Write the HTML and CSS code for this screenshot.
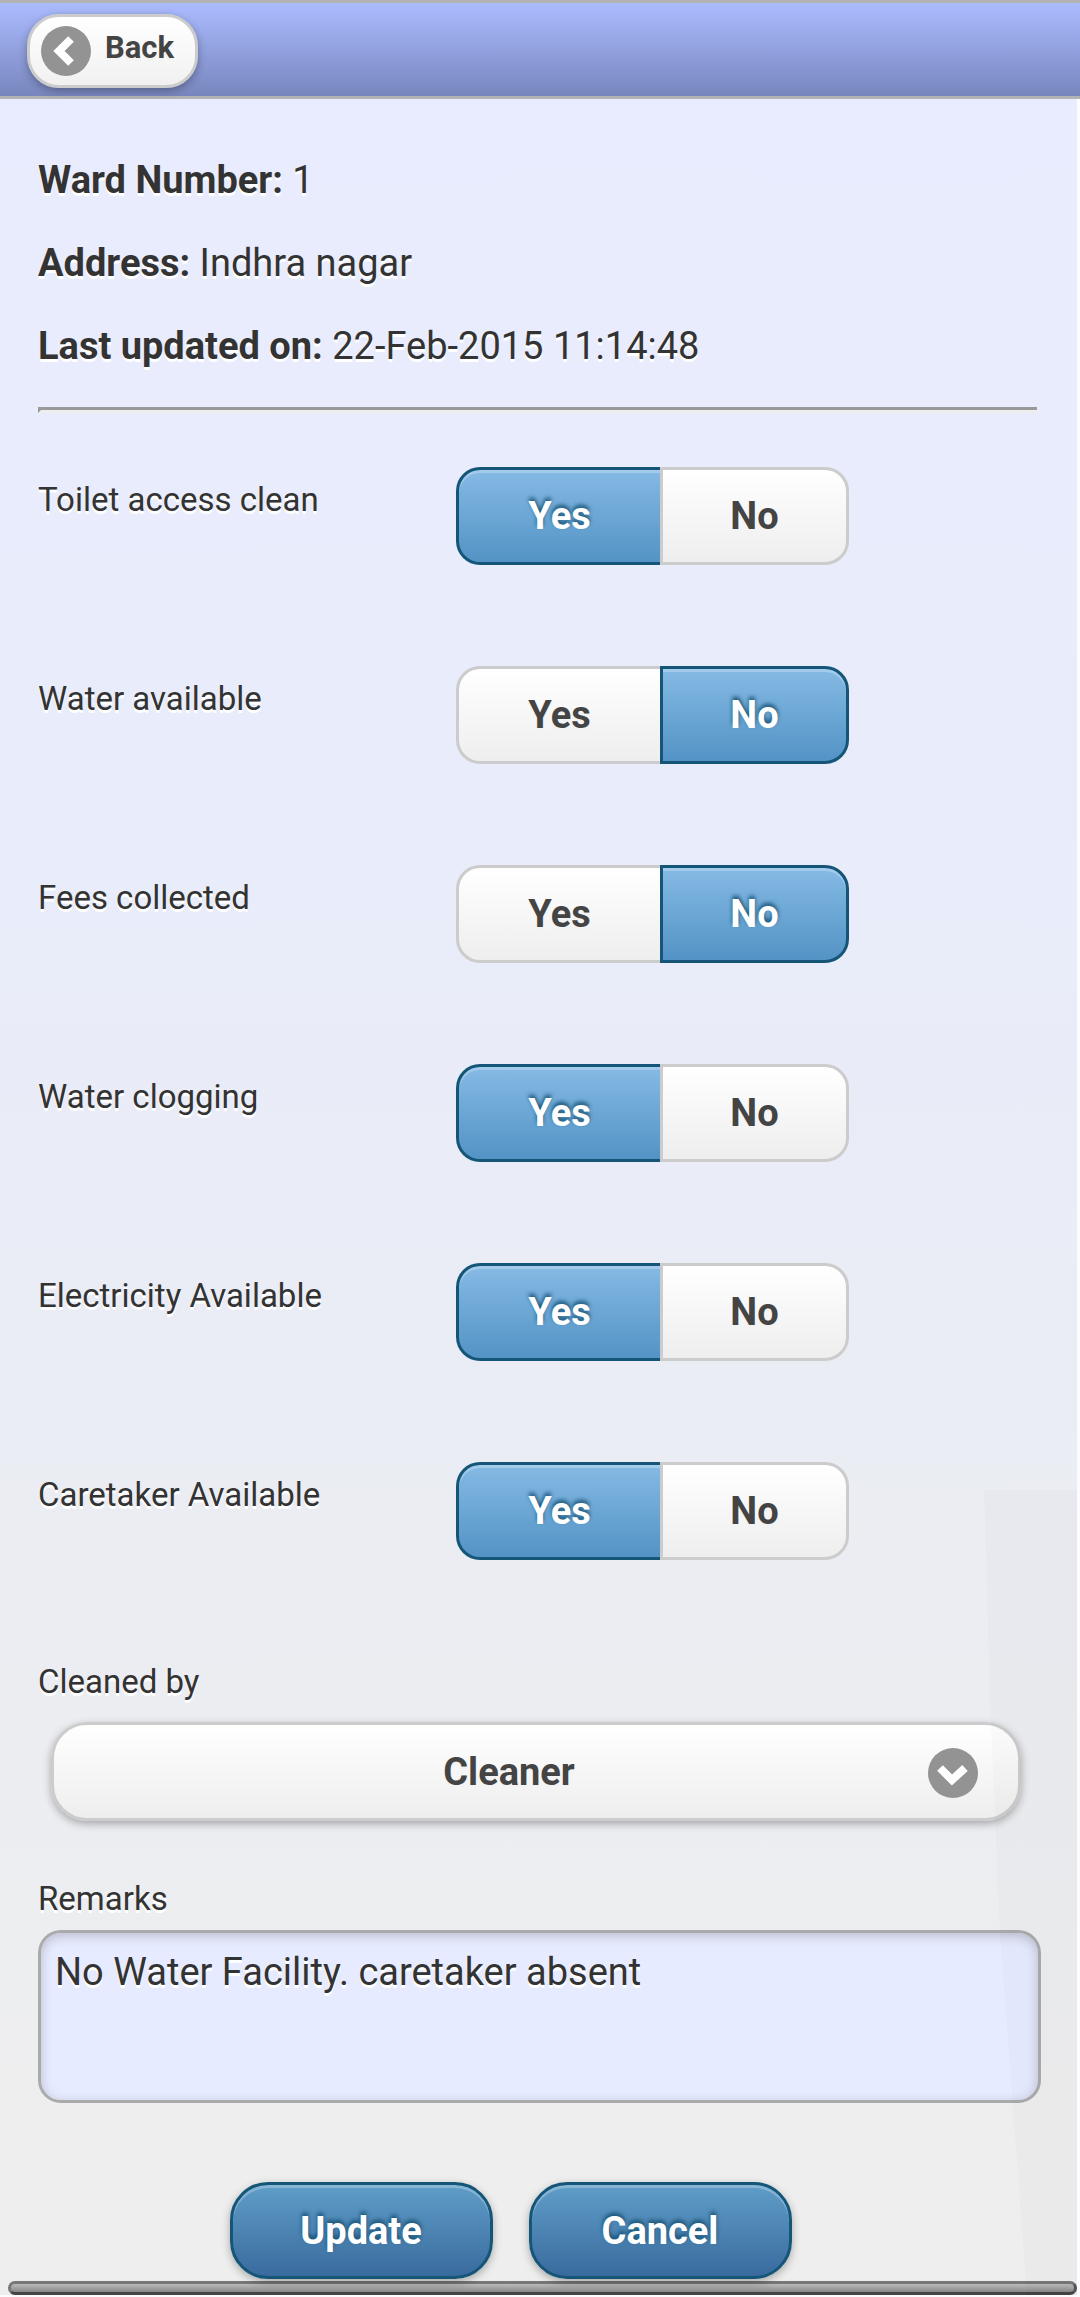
FILE: index.html
```
<!DOCTYPE html>
<html lang="en">

<head>
    <meta charset="UTF-8">
    <meta name="viewport" content="width=device-width, initial-scale=1.0">
    <title>Toilet status</title>
    <link rel="stylesheet" href="styles.css">
</head>

<body>
    <header class="header">
        <a class="btn-back" href="#">
            <svg class="icon" viewBox="0 0 50 50" aria-hidden="true">
                <circle cx="25" cy="25" r="25" fill="#939393" />
                <path d="M30 13 L18 25 L30 37" fill="none" stroke="#fff" stroke-width="8" />
            </svg>
            <span>Back</span>
        </a>
    </header>
    <div class="page">
        <main class="content">
            <section class="details">
                <p><b>Ward Number:</b> 1</p>
                <p><b>Address:</b> Indhra nagar</p>
                <p><b>Last updated on:</b> 22-Feb-2015 11:14:48</p>
            </section>
            <hr class="divider">
            <form>
                <div class="questions">
                    <div class="question" role="radiogroup" aria-labelledby="q1">
                        <span class="label" id="q1">Toilet access clean</span>
                        <div class="switch">
                            <label><input type="radio" name="access" checked>Yes</label>
                            <label><input type="radio" name="access">No</label>
                        </div>
                    </div>
                    <div class="question" role="radiogroup" aria-labelledby="q2">
                        <span class="label" id="q2">Water available</span>
                        <div class="switch">
                            <label><input type="radio" name="water">Yes</label>
                            <label><input type="radio" name="water" checked>No</label>
                        </div>
                    </div>
                    <div class="question" role="radiogroup" aria-labelledby="q3">
                        <span class="label" id="q3">Fees collected</span>
                        <div class="switch">
                            <label><input type="radio" name="fees">Yes</label>
                            <label><input type="radio" name="fees" checked>No</label>
                        </div>
                    </div>
                    <div class="question" role="radiogroup" aria-labelledby="q4">
                        <span class="label" id="q4">Water clogging</span>
                        <div class="switch">
                            <label><input type="radio" name="clogging" checked>Yes</label>
                            <label><input type="radio" name="clogging">No</label>
                        </div>
                    </div>
                    <div class="question" role="radiogroup" aria-labelledby="q5">
                        <span class="label" id="q5">Electricity Available</span>
                        <div class="switch">
                            <label><input type="radio" name="electricity" checked>Yes</label>
                            <label><input type="radio" name="electricity">No</label>
                        </div>
                    </div>
                    <div class="question" role="radiogroup" aria-labelledby="q6">
                        <span class="label" id="q6">Caretaker Available</span>
                        <div class="switch">
                            <label><input type="radio" name="caretaker" checked>Yes</label>
                            <label><input type="radio" name="caretaker">No</label>
                        </div>
                    </div>
                </div>
                <label class="label" for="cleaned">Cleaned by</label>
                <div class="select-box">
                    <select id="cleaned">
                        <option>Cleaner</option>
                    </select>
                    <svg class="icon" viewBox="0 0 50 50" aria-hidden="true">
                        <circle cx="25" cy="25" r="25" fill="#939393" />
                        <path d="M12 20 L24 32 L37 20" fill="none" stroke="#fff" stroke-width="8" />
                    </svg>
                </div>
                <label class="label" for="remarks">Remarks</label>
                <textarea class="remarks" id="remarks">No Water Facility. caretaker absent</textarea>
                <div class="actions">
                    <button class="btn" type="submit">Update</button>
                    <button class="btn" type="button">Cancel</button>
                </div>
            </form>
        </main>
        <div class="bottom-bar"></div>
        <div class="shade"></div>
    </div>
</body>

</html>
```
FILE: styles.css
```
* {
    box-sizing: border-box;
}

body {
    margin: 0;
    font-family: Roboto, "Liberation Sans", sans-serif;
    font-size: 38px;
    line-height: 48px;
    color: #333;
    text-shadow: 0 3px 0 #fff;
    background: #fcfcff;
}

.page {
    position: relative;
    margin-right: 3px;
    background: linear-gradient(#e8ecfe, #e9ecf9 40%, #ebedf3 65%, #eee 95%);
}

/* header */
.header {
    display: flex;
    height: 99px;
    padding: 11px 27px 0;
    border-top: 3px solid #b3b3b3;
    border-bottom: 3px solid #b3b3b3;
    background: linear-gradient(#abbcff, #7886be);
}

.btn-back {
    display: flex;
    align-items: center;
    gap: 14px;
    height: 74px;
    padding: 0 21px 0 11px;
    border: 3px solid #ccc;
    border-radius: 32px;
    background: linear-gradient(#fff, #f1f1f1);
    box-shadow: 0 3px 9px rgba(0, 0, 0, .3);
    color: #444;
    font-size: 31px;
    font-weight: bold;
    text-decoration: none;
    text-shadow: 0 3px 0 #f3f3f3;
}

.btn-back span {
    padding-bottom: 6px;
}

.icon {
    width: 50px;
    height: 50px;
}

/* content */
.content {
    padding: 57px 36px 0 38px;
}

.details p {
    margin: 0 0 35px;
}

.divider {
    height: 6px;
    margin: 37px 4px 54px 0;
    border: 3px solid;
    border-color: #999 #eee #eee #999;
    border-right: 0;
}

.label {
    display: block;
    font-size: 33px;
    line-height: 44px;
}

.questions {
    display: grid;
    gap: 101px;
    margin-bottom: 100px;
}

.question {
    display: grid;
    grid-template-columns: 418px auto;
}

.question .label {
    padding-top: 11px;
}

.switch {
    display: flex;
}

.switch label {
    display: flex;
    align-items: center;
    justify-content: center;
    width: 204px;
    height: 98px;
    border: 3px solid #ccc;
    border-right: 0;
    border-radius: 24px 0 0 24px;
    background: linear-gradient(#fff, #eee);
    color: #444;
    font-weight: bold;
    text-shadow: 0 3px 0 #f3f3f3;
}

.switch label + label {
    width: 189px;
    border-right: 3px solid #ccc;
    border-radius: 0 24px 24px 0;
}

.switch label:has(:checked) {
    border-color: #155678;
    background: linear-gradient(#85bae4, #5393c5);
    box-shadow: inset 0 3px 0 rgba(255, 255, 255, .25);
    color: #fff;
    text-shadow: 0 -3px 4px #145072;
}

.switch input {
    position: absolute;
    opacity: 0;
}

.select-box {
    position: relative;
    margin: 18px 20px 56px 13px;
}

.select-box select {
    display: block;
    width: 100%;
    height: 99px;
    padding: 0 68px 0 14px;
    border: 3px solid #ccc;
    border-radius: 36px;
    appearance: none;
    background: linear-gradient(#fff, #eee);
    box-shadow: 0 3px 9px rgba(0, 0, 0, .3);
    color: #444;
    font: bold 38px Roboto, "Liberation Sans", sans-serif;
    text-align-last: center;
    text-shadow: 0 3px 0 #f3f3f3;
}

.select-box .icon {
    position: absolute;
    top: 26px;
    right: 43px;
    pointer-events: none;
}

.remarks {
    display: block;
    width: 100%;
    height: 173px;
    margin-top: 9px;
    padding: 15px 14px;
    border: 3px solid #aaa;
    border-radius: 23px;
    background: #e7ebff;
    box-shadow: inset 0 3px 12px rgba(0, 0, 0, .2);
    color: #333;
    font: inherit;
    text-shadow: inherit;
    resize: none;
}

.actions {
    display: flex;
    justify-content: center;
    gap: 36px;
    margin-top: 79px;
    padding: 0 58px 2px 0;
}

.btn {
    width: 263px;
    height: 97px;
    border: 3px solid #155678;
    border-radius: 38px;
    background: linear-gradient(#609dc8, #396b9e);
    box-shadow: inset 0 3px 0 rgba(255, 255, 255, .25), 0 3px 9px rgba(0, 0, 0, .3);
    color: #fff;
    font: inherit;
    font-weight: bold;
    text-shadow: 0 -3px 4px #145072;
}

.bottom-bar {
    height: 14px;
    margin: 0 0 0 8px;
    border: 3px solid;
    border-color: #777 #555 #444 #777;
    border-radius: 7px;
    background: linear-gradient(#bbb, #888);
}

/* faint panel along the right edge */
.shade {
    position: absolute;
    right: 0;
    bottom: 0;
    width: 93px;
    height: 805px;
    background: rgba(0, 0, 0, .015);
    clip-path: polygon(0 0, 100% 0, 100% 100%, 46% 100%, 30% 75%, 17% 55%, 6% 25%);
    pointer-events: none;
}
```
